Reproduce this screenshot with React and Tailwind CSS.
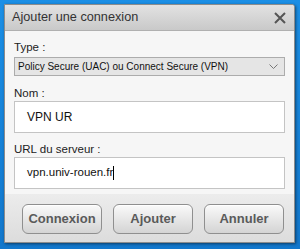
export default function App() {
  const font = { fontFamily: '"Liberation Sans", Arial, sans-serif' };
  return (
    <div
      className="w-[300px] h-[249px] overflow-hidden bg-gradient-to-b from-[#1b8fe6] to-[#1277cc] pt-[4px] pl-[4px]"
      style={font}
    >
      <div className="w-[291px] h-[239px] flex flex-col border border-[#8c8c8c] rounded-tr-[3px] bg-[#f6f6f6] shadow-[1px_1px_3px_rgba(0,0,0,0.5)] overflow-hidden">
        {/* Title bar */}
        <div className="h-[26px] shrink-0 flex items-center justify-between pl-[7px] pr-[8px] bg-gradient-to-b from-[#e2e2e2] to-[#c9c9c9] border-b border-[#b0b0b0]">
          <span className="text-[12.7px] text-[#333]">Ajouter une connexion</span>
          <svg width="12" height="12" viewBox="0 0 12 12">
            <path d="M1 1 L11 11 M11 1 L1 11" stroke="#555" strokeWidth="2" />
          </svg>
        </div>

        {/* Form */}
        <div className="flex flex-col px-[9px] pb-[5px]">
          <div className="mt-[9px] h-[14px] text-[11.5px] leading-[14px] text-[#222]">Type :</div>
          <div className="mt-[3px] h-[19px] flex items-center justify-between bg-[#e5e5e5] border border-[#acacac] pl-[3px] pr-[6px]">
            <span className="text-[10px] text-[#111]">Policy Secure (UAC) ou Connect Secure (VPN)</span>
            <svg width="9" height="6" viewBox="0 0 9 6">
              <path d="M0.5 0.5 L4.5 4.5 L8.5 0.5" stroke="#777" strokeWidth="1" fill="none" />
            </svg>
          </div>
          <div className="mt-[10px] h-[15px] text-[11.5px] leading-[15px] text-[#222]">Nom :</div>
          <div className="h-[32px] flex items-center bg-white border border-[#c4c4c4] pl-[12px]">
            <span className="text-[12px] text-[#111]">VPN UR</span>
          </div>
          <div className="mt-[9px] h-[15px] text-[11.5px] leading-[15px] text-[#222]">URL du serveur :</div>
          <div className="h-[32px] flex items-center bg-white border border-[#c4c4c4] pl-[12px]">
            <span className="text-[11.5px] text-[#111]">vpn.univ-rouen.fr</span>
            <span className="w-px h-[14px] bg-black" />
          </div>
        </div>

        {/* Footer */}
        <div className="flex-1 flex items-start gap-[11px] pl-[17px] pt-[10px] bg-gradient-to-b from-[#ececec] to-[#dcdcdc]">
          {["Connexion", "Ajouter", "Annuler"].map((label) => (
            <button
              key={label}
              className="w-[80px] h-[30px] rounded-[6px] border border-[#8f8f8f] bg-gradient-to-b from-[#fafafa] to-[#d4d4d4] text-[13px] font-bold text-[#5a5a5a] shadow-[inset_0_1px_0_#fff]"
              style={font}
            >
              {label}
            </button>
          ))}
        </div>
      </div>
    </div>
  );
}
